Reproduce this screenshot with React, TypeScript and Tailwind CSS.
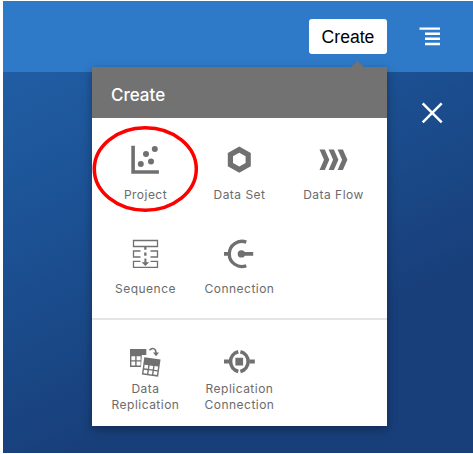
import type { ReactNode } from "react";

const GREY = "#707070";

function Icon({ box, children }: { box: string; children: ReactNode }) {
  return (
    <svg className="block h-8 w-8 shrink-0" viewBox={box} fill={GREY}>
      {children}
    </svg>
  );
}

function Tile({ icon, label }: { icon: ReactNode; label: string }) {
  return (
    <button className="flex w-[94px] flex-col items-center justify-between">
      {icon}
      <span className="whitespace-pre-line text-center font-['Inter','Liberation_Sans',sans-serif] text-[12px] leading-[15.5px] tracking-[0.48px] text-[#6b6b6b]">
        {label}
      </span>
    </button>
  );
}

const ProjectIcon = (
  <Icon box="130 144 32 32">
    <path d="M131.300 145.700h3.600v24.600h24v3.500h-27.600z" />
    <circle cx="154.800" cy="149" r="3" />
    <circle cx="146" cy="154" r="3" />
    <circle cx="151" cy="161.600" r="3" />
    <circle cx="140.800" cy="164" r="3" />
  </Icon>
);

const DataSetIcon = (
  <Icon box="224 144 32 32">
    <path
      fillRule="evenodd"
      d="M239.300 146.500l11.500 6.400v13.400l-11.500 6.500-11.500-6.500v-13.400zM239.300 152.700l-6.300 3.500v6.900l6.300 3.500 6.300-3.500v-6.900z"
    />
  </Icon>
);

const DataFlowIcon = (
  <Icon box="318 144 32 32">
    <path d="M319.500 149.600h5.300l4.500 10.200-4.500 10.200h-5.300l4.500-10.200z" />
    <path d="M328.600 149.600h5.300l4.500 10.200-4.500 10.200h-5.300l4.500-10.200z" />
    <path d="M337.600 149.600h5.300l4.500 10.200-4.500 10.200h-5.300l4.500-10.200z" />
  </Icon>
);

const SequenceIcon = (
  <Icon box="130 238 32 32">
    <g fill="none" stroke={GREY} strokeWidth="1.300">
      <path d="M133.500 240.500h24v6h-24z" />
      <path d="M140.500 251h-7v6h7M150.500 251h7v6h-7" />
      <path d="M140.500 261.300h-7v6h24v-6h-7" />
    </g>
    <path d="M144.200 247h2.300v2.800h-2.300zM144.200 252.500h2.300v3.200h-2.300zM144.400 258.500h2v3.800h2.800l-3.800 3.800-3.800-3.800h2.800z" />
  </Icon>
);

const ConnectionIcon = (
  <Icon box="224 238 32 32">
    <path
      d="M246.300 242.100a12.600 12.600 0 1 0 0 23.600"
      fill="none"
      stroke={GREY}
      strokeWidth="3.300"
    />
    <path d="M224 252h5v3.800h-5zM241 252h12.200v3.800h-12.200z" />
    <circle cx="241.400" cy="253.900" r="3.700" />
  </Icon>
);

const DataReplicationIcon = (
  <Icon box="130 346 32 32">
    <path
      fillRule="evenodd"
      d="M130 348.900h16.300v6.100h-4.500l-.8 12h-11zM131.400 356.200v4h3.800v-4zM136.600 356.200v4h4v-4zM131.400 361.600v4h3.800v-4zM136.600 361.600v4h4v-4z"
    />
    <g transform="rotate(8 151 367)">
      <path
        fillRule="evenodd"
        d="M143 358.300h16.400v17.400H143zM144.400 365.600v3.600h3.600v-3.600zM149.400 365.600v3.600h3.600v-3.600zM154.400 365.600v3.600h3.600v-3.600zM144.400 370.600v3.600h3.600v-3.600zM149.400 370.600v3.600h3.600v-3.600zM154.400 370.600v3.600h3.600v-3.600z"
      />
    </g>
    <path
      d="M149.500 350.200c2.500-3.100 6.500-2.100 6.500 3"
      fill="none"
      stroke={GREY}
      strokeWidth="1.500"
    />
    <path d="M153 352.500h6l-3 3.700z" />
  </Icon>
);

const ReplicationConnectionIcon = (
  <Icon box="224 346 32 32">
    <path
      d="M238.300 351.700a10.200 10.200 0 0 0 0 19.800M240.400 351.700a10.200 10.200 0 0 1 0 19.800"
      fill="none"
      stroke={GREY}
      strokeWidth="3.600"
    />
    <path d="M224 359.500h5v4h-5zM249.600 359.500h5.200v4h-5.200zM235.400 357.800h7.700v7.600h-7.700z" />
  </Icon>
);

export default function App() {
  return (
    <div className="h-[454px] w-[473px] overflow-hidden bg-white pl-[3px] pt-px">
      <div className="relative flex h-[452px] flex-col bg-[linear-gradient(155deg,#2362aa_0%,#1c5295_35%,#183f7a_72%,#183f7a_100%)]">
        <header className="flex h-[71px] shrink-0 items-start justify-end bg-[#2e7ac8] pr-8 pt-[18px]">
          <button className="h-[35px] w-[78px] rounded-[3px] bg-white pt-px font-['Liberation_Sans',Arial,sans-serif] text-[17.600px] leading-[34px] text-black">
            Create
          </button>
          <svg className="ml-8 mt-[7px] h-5 w-[22px]" viewBox="419 26 22 20" fill="white">
            <path d="M419.500 27.400H440v2.400h-20.500zM425 32.400h15v2.600h-15zM425 37.500h15v2.600h-15zM425 42.700h15v2.600h-15z" />
          </svg>
        </header>
        <div className="flex justify-end pr-[29px] pt-[29px]">
          <button aria-label="Close" className="h-6 w-6">
            <svg className="block h-6 w-6" viewBox="0 0 24 24" stroke="white" strokeWidth="2.500">
              <path d="M2.700 2.300l19 19M21.700 2.300l-19 19" />
            </svg>
          </button>
        </div>

        <div className="absolute left-[89px] top-[66px] h-[359px] w-[295px] bg-white shadow-[0_3px_9px_rgba(0,0,0,0.35)]">
          <svg className="absolute left-[258px] top-[-6px] h-[7px] w-4" viewBox="0 0 16 7" fill="#727272">
            <path d="M0 7L7.500 0L15 7z" />
          </svg>
          <div className="h-[51px] bg-[#727272] pl-[19px] font-['Inter','Liberation_Sans',sans-serif] text-[17px] font-medium leading-[56px] text-white">
            Create
          </div>
          <div className="flex h-[202px] flex-wrap content-start gap-y-9 border-b-2 border-[#e3e6e8] pl-[6.5px] pt-[26px]">
            <div className="flex h-[58px]">
              <Tile icon={ProjectIcon} label="Project" />
              <Tile icon={DataSetIcon} label="Data Set" />
              <Tile icon={DataFlowIcon} label="Data Flow" />
            </div>
            <div className="flex h-[58px]">
              <Tile icon={SequenceIcon} label="Sequence" />
              <Tile icon={ConnectionIcon} label="Connection" />
            </div>
          </div>
          <div className="flex h-[92px] pl-[6.5px] pt-[26px]">
            <Tile icon={DataReplicationIcon} label={"Data\nReplication"} />
            <Tile icon={ReplicationConnectionIcon} label={"Replication\nConnection"} />
          </div>
          <svg className="absolute left-0 top-[58px] h-[88px] w-[108px]" viewBox="0 0 108 88" fill="none">
            <ellipse cx="53.300" cy="44" rx="51" ry="41.200" stroke="#fd0000" strokeWidth="3.500" />
          </svg>
        </div>
      </div>
    </div>
  );
}
